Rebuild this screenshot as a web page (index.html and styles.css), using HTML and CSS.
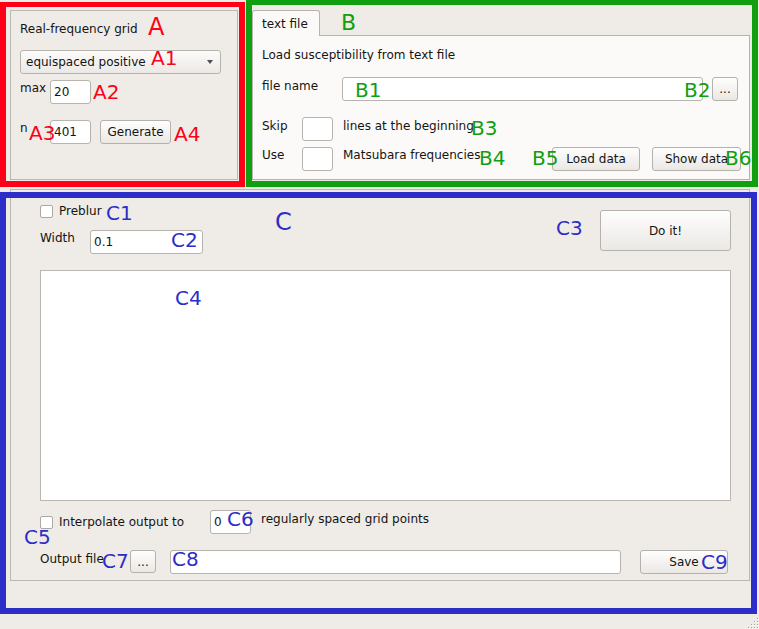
FILE: index.html
```html
<!DOCTYPE html>
<html>
<head>
<meta charset="utf-8">
<link rel="stylesheet" href="styles.css">
</head>
<body>
<div class="window">
  <div class="top-row">
    <div class="group">
      <div class="group-title">Real-frequency grid</div>
      <div class="combo"><span class="combo-text">equispaced positive</span><span class="combo-arrow"></span></div>
      <div class="form-row row-max">
        <span class="lbl-narrow">max</span>
        <span class="input w41">20</span>
      </div>
      <div class="form-row row-n">
        <span class="lbl-narrow">n</span>
        <span class="input w41">401</span>
        <span class="btn btn-generate">Generate</span>
      </div>
    </div>
    <div class="tabs">
      <div class="tabbar"><div class="tab">text file</div></div>
      <div class="pane">
        <div class="pane-title">Load susceptibility from text file</div>
        <div class="form-row row-file">
          <span class="lbl-file">file name</span>
          <span class="input input-file"></span>
          <span class="btn btn-dots">...</span>
        </div>
        <div class="form-row row-skip">
          <span class="lbl-skip">Skip</span>
          <span class="input input-small"></span>
          <span class="txt-after">lines at the beginning</span>
        </div>
        <div class="form-row row-use">
          <span class="lbl-use">Use</span>
          <span class="input input-small"></span>
          <span class="txt-after txt-use">Matsubara frequencies</span>
          <span class="btn btn-load">Load data</span>
          <span class="btn btn-show">Show data</span>
        </div>
      </div>
    </div>
  </div>
  <div class="cframe">
    <div class="c-top">
      <div class="c-left">
        <div class="check-row"><span class="checkbox"></span><span>Preblur</span></div>
        <div class="form-row row-width">
          <span class="lbl-width">Width</span>
          <span class="input input-width">0.1</span>
        </div>
      </div>
      <span class="btn btn-doit">Do it!</span>
    </div>
    <div class="textarea"></div>
    <div class="row-interp">
      <div class="interp-check"><span class="checkbox"></span><span>Interpolate output to</span></div>
      <span class="input w41">0</span>
      <span class="txt-grid">regularly spaced grid points</span>
    </div>
    <div class="form-row row-output">
      <span class="lbl-output">Output file</span>
      <span class="btn btn-dots2">...</span>
      <span class="input input-output"></span>
      <span class="btn btn-save">Save</span>
    </div>
  </div>
</div>

<svg class="grip" width="12" height="12" viewBox="0 0 12 12">
  <g fill="#ffffff">
    <rect x="11" y="2" width="1" height="1"/>
    <rect x="8" y="5" width="1" height="1"/><rect x="11" y="5" width="1" height="1"/>
    <rect x="5" y="8" width="1" height="1"/><rect x="8" y="8" width="1" height="1"/><rect x="11" y="8" width="1" height="1"/>
    <rect x="2" y="11" width="1" height="1"/><rect x="5" y="11" width="1" height="1"/><rect x="8" y="11" width="1" height="1"/><rect x="11" y="11" width="1" height="1"/>
  </g>
  <g fill="#a8a4a0">
    <rect x="10" y="1" width="1" height="1"/>
    <rect x="7" y="4" width="1" height="1"/><rect x="10" y="4" width="1" height="1"/>
    <rect x="4" y="7" width="1" height="1"/><rect x="7" y="7" width="1" height="1"/><rect x="10" y="7" width="1" height="1"/>
    <rect x="1" y="10" width="1" height="1"/><rect x="4" y="10" width="1" height="1"/><rect x="7" y="10" width="1" height="1"/><rect x="10" y="10" width="1" height="1"/>
  </g>
</svg>

<div class="hl hl-red"></div>
<div class="hl hl-green"></div>
<div class="hl hl-blue"></div>

<span class="ann big red ann-a">A</span>
<span class="ann red ann-a1">A1</span>
<span class="ann red ann-a2">A2</span>
<span class="ann red ann-a3">A3</span>
<span class="ann red ann-a4">A4</span>

<span class="ann mid green ann-b">B</span>
<span class="ann green ann-b1">B1</span>
<span class="ann green ann-b2">B2</span>
<span class="ann green ann-b3">B3</span>
<span class="ann green ann-b4">B4</span>
<span class="ann green ann-b5">B5</span>
<span class="ann green ann-b6">B6</span>

<span class="ann big blue ann-c">C</span>
<span class="ann blue ann-c1">C1</span>
<span class="ann blue ann-c2">C2</span>
<span class="ann blue ann-c3">C3</span>
<span class="ann blue ann-c4">C4</span>
<span class="ann blue ann-c5">C5</span>
<span class="ann blue ann-c6">C6</span>
<span class="ann blue ann-c7">C7</span>
<span class="ann blue ann-c8">C8</span>
<span class="ann blue ann-c9">C9</span>
</body>
</html>
```
FILE: styles.css
```css
* { box-sizing: border-box; }
html, body { margin: 0; padding: 0; }
body {
  width: 759px;
  height: 629px;
  overflow: hidden;
  position: relative;
  background: #efebe7;
  font-family: "DejaVu Sans", "Noto Sans", sans-serif;
  font-size: 12px;
  line-height: 14px;
  color: #141414;
}

.window { padding: 10px 9px 0 10px; }

.top-row { display: flex; gap: 14px; height: 170px; }

/* group A */
.group {
  width: 228px;
  height: 170px;
  border: 1px solid #bbb7b3;
  padding: 11px 0 0 9px;
}
.group-title { height: 14px; }
.combo {
  margin-top: 14px;
  width: 201px;
  height: 24px;
  border: 1px solid #b7b3af;
  border-radius: 3px;
  background: linear-gradient(#fdfcfb, #ebe8e5);
  display: flex;
  align-items: center;
  padding: 0 7px 0 5px;
}
.combo-text { flex: 1; }
.combo-arrow {
  width: 0; height: 0;
  border-left: 3.5px solid transparent;
  border-right: 3.5px solid transparent;
  border-top: 4px solid #4d4d4d;
}

.form-row { display: flex; align-items: flex-start; height: 24px; }
.row-max { margin-top: 6px; }
.row-n { margin-top: 16px; }
.lbl-narrow { width: 30px; margin-top: 1px; }

.input {
  height: 24px;
  background: #fff;
  border: 1px solid #b7b3af;
  border-radius: 3px;
  padding: 0 3px;
  display: flex;
  align-items: center;
}
.w41 { width: 41px; }

.btn {
  height: 24px;
  border: 1px solid #b5b1ad;
  border-radius: 3px;
  background: linear-gradient(#fefefe, #ebe8e4);
  display: flex;
  align-items: center;
  justify-content: center;
}
.btn-generate { width: 71px; margin-left: 9px; }

/* tab widget B */
.tabs { width: 498px; height: 170px; display: flex; flex-direction: column; }
.tabbar { height: 25px; display: flex; }
.tab {
  width: 68px;
  height: 26px;
  background: #fcfaf8;
  border: 1px solid #b7b3af;
  border-bottom: none;
  border-radius: 3px 3px 0 0;
  padding-left: 9px;
  display: flex;
  align-items: center;
  position: relative;
  z-index: 1;
}
.pane {
  height: 145px;
  background: #fcfaf8;
  border: 1px solid #b7b3af;
  padding: 12px 0 0 9px;
}
.pane-title { height: 14px; }
.row-file { margin-top: 15px; }
.row-skip { margin-top: 16px; }
.row-use { margin-top: 6px; }
.lbl-file { width: 80px; margin-top: 2px; }
.input-file { width: 361px; }
.btn-dots { width: 26px; margin-left: 9px; }
.lbl-skip { width: 40px; margin-top: 2px; }
.lbl-use { width: 40px; margin-top: 1px; }
.input-small { width: 31px; }
.txt-after { margin-left: 10px; margin-top: 2px; }
.txt-use { margin-top: 1px; }
.btn-load { width: 88px; margin-left: auto; }
.btn-show { width: 89px; margin-left: 12px; margin-right: 8px; }

/* frame C */
.cframe {
  margin-top: 9px;
  height: 392px;
  border: 1px solid #bbb7b3;
  padding: 14px 18px 6px 29px;
}
.c-top { display: flex; height: 50px; }
.c-left { display: flex; flex-direction: column; }
.check-row { display: flex; align-items: center; height: 14px; }
.checkbox {
  width: 13px;
  height: 13px;
  border: 1px solid #aca8a4;
  border-radius: 2px;
  background: #fff;
  margin-right: 6px;
}
.row-width { margin-top: 12px; }
.lbl-width { width: 50px; margin-top: 1px; }
.input-width { width: 113px; }
.btn-doit { margin-left: auto; margin-top: 6px; width: 131px; height: 41px; }

.textarea {
  margin-top: 16px;
  height: 231px;
  background: #fff;
  border: 1px solid #bab7b3;
}

.row-interp { margin-top: 9px; display: flex; align-items: center; height: 24px; }
.interp-check { width: 170px; display: flex; align-items: center; }
.txt-grid { margin-left: 10px; align-self: flex-start; margin-top: 2px; }

.row-output { margin-top: 16px; }
.lbl-output { width: 90px; margin-top: 2px; }
.btn-dots2 { width: 26px; height: 23px; }
.input-output { width: 451px; margin-left: 14px; }
.btn-save { width: 88px; margin-left: 19px; }

.grip { position: absolute; right: 0; bottom: 0; }

/* annotation overlays */
.hl { position: absolute; border: 6px solid; }
.hl-red { left: 0; top: 2px; width: 245px; height: 185px; border-color: #ff0019; border-top-width: 5px; }
.hl-green { left: 246px; top: -1px; width: 512px; height: 188px; border-color: #0f9f0f; }
.hl-blue { left: 0; top: 192px; width: 757px; height: 422px; border-color: #2d2dc8; }

.ann {
  position: absolute;
  font-family: "DejaVu Sans", sans-serif;
  font-size: 20px;
  line-height: 20px;
  white-space: nowrap;
}
.ann.big { font-size: 24px; line-height: 24px; }
.ann.mid { font-size: 22px; line-height: 22px; }
.red { color: #ff0019; }
.green { color: #0f9f0f; }
.blue { color: #2d2dc8; }

.ann-a { left: 148px; top: 15px; }
.ann-a1 { left: 151px; top: 48px; }
.ann-a2 { left: 93px; top: 82px; }
.ann-a3 { left: 29px; top: 123px; }
.ann-a4 { left: 174px; top: 124px; }

.ann-b { left: 341px; top: 12px; }
.ann-b1 { left: 355px; top: 80px; }
.ann-b2 { left: 684px; top: 80px; }
.ann-b3 { left: 471px; top: 118px; }
.ann-b4 { left: 479px; top: 148px; }
.ann-b5 { left: 532px; top: 148px; }
.ann-b6 { left: 725px; top: 148px; }

.ann-c { left: 275px; top: 210px; }
.ann-c1 { left: 106px; top: 203px; }
.ann-c2 { left: 171px; top: 230px; }
.ann-c3 { left: 556px; top: 218px; }
.ann-c4 { left: 175px; top: 288px; }
.ann-c5 { left: 24px; top: 527px; }
.ann-c6 { left: 227px; top: 509px; }
.ann-c7 { left: 102px; top: 551px; }
.ann-c8 { left: 172px; top: 549px; }
.ann-c9 { left: 701px; top: 552px; }
```
